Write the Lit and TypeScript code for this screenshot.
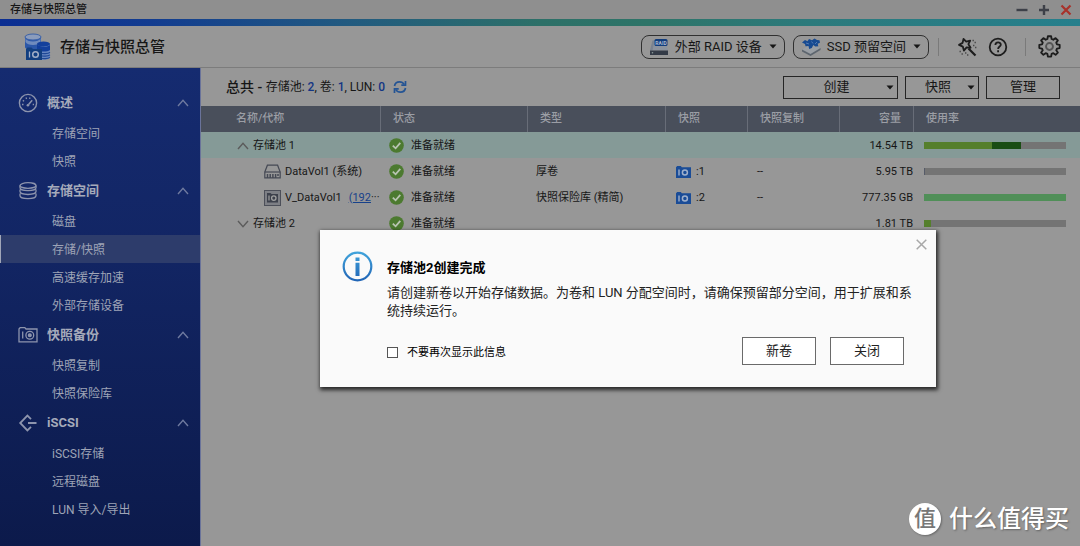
import { LitElement, html, css, svg } from "lit";
import { customElement, state } from "lit/decorators.js";
import { classMap } from "lit/directives/class-map.js";

const caret = svg`<svg class="caret" viewBox="0 0 8 5" width="8" height="5"><path d="M0.5 0.5h7L4 4.6z" fill="currentColor"/></svg>`;

const chevron = (up: boolean) => html`<svg width="12" height="8" viewBox="0 0 12 8" fill="none" stroke="currentColor" stroke-width="1.4">
  <path d=${up ? "M1 7 6 1.4 11 7" : "M1 1 6 6.6 11 1"} />
</svg>`;

const okIcon = html`<svg class="ok" width="15" height="15" viewBox="0 0 15 15">
  <circle cx="7.5" cy="7.5" r="7.3" fill="#4c7a30" />
  <path d="M3.8 7.6 6.6 10.3 11.3 4.9" fill="none" stroke="#b9c4b2" stroke-width="1.8" />
</svg>`;

const snapIcon = html`<svg width="15" height="12" viewBox="0 0 15 12">
  <path d="M0 1.2 1.2 0h3.6l1 1.2H15V12H0z" fill="#1a4c97" />
  <path d="M3 3.4v6" stroke="#9fb0cc" stroke-width="1.4" />
  <circle cx="8.9" cy="6.4" r="2.5" fill="none" stroke="#9fb0cc" stroke-width="1.5" />
</svg>`;

const diskIcon = html`<svg width="17" height="15" viewBox="0 0 17 15" fill="none" stroke="#454954" stroke-width="1.2">
  <path d="M.8 8 3.4 1.2h10.2L16.2 8v5.8H.8z" />
  <path d="M.8 8h15.4" />
  <path d="M3.5 10v4M6.200 10v4M8.900 10v4M11.600 10v4M14 10v2" stroke-width="1.5" />
</svg>`;

const vaultIcon = html`<svg width="17" height="16" viewBox="0 0 17 16">
  <rect x=".5" y=".5" width="16" height="15" fill="#7d7f85" stroke="#4c4f59" />
  <path d="M3 3h3.500l1 1H14v8.500H3z" fill="#3d414c" />
  <path d="M5 5.500v5" stroke="#a0a0a0" stroke-width="1.2" />
  <circle cx="9.800" cy="8.100" r="2.200" fill="none" stroke="#a0a0a0" stroke-width="1.300" />
</svg>`;

const navIcons: Record<string, unknown> = {
  gauge: svg`<svg width="20" height="20" viewBox="0 0 20 20" fill="none" stroke="currentColor" stroke-width="1.400">
    <circle cx="10" cy="10" r="8.600"/>
    <path d="M10.600 11.500 14.200 7.200" stroke-width="1.500"/>
    <circle cx="9.900" cy="12.300" r="1.300" fill="currentColor" stroke="none"/>
    <path d="M4 11.500h1.500M4.800 7.400l1.300.8M8 4.500l.6 1.400M12 4.500l-.4 1.400M14.700 11.500H16" stroke-width="1.300"/></svg>`,
  stack: svg`<svg width="20" height="20" viewBox="0 0 20 20" fill="none" stroke="currentColor" stroke-width="1.300">
    <ellipse cx="10" cy="4.500" rx="8" ry="2.800"/>
    <path d="M2 4.500v2.200c0 1.600 3.600 2.900 8 2.900s8-1.300 8-2.900V4.500M2 8.600v2c0 1.600 3.600 2.900 8 2.900s8-1.300 8-2.900v-2M2 12.600v2.200c0 1.600 3.600 2.900 8 2.900s8-1.300 8-2.900v-2.200"/></svg>`,
  camera: svg`<svg width="20" height="20" viewBox="0 0 20 20" fill="none" stroke="currentColor" stroke-width="1.300">
    <path d="M1 4 2.200 2.600h4.600L8 4h11v12.800H1z"/><path d="M4.700 6.500v7"/>
    <circle cx="11.800" cy="10.200" r="3.900"/><circle cx="11.800" cy="10.200" r="1.400" fill="currentColor"/></svg>`,
  iscsi: svg`<svg width="20" height="20" viewBox="0 0 20 20" fill="none" stroke="currentColor" stroke-width="1.800">
    <path d="M13 6.200 9.400 2.600 2.200 10l7.200 7.400 3.600-3.600M10 10h8.500"/></svg>`,
};

interface Section { icon: string; title: string; items: string[] }

const sections: Section[] = [
  { icon: "gauge", title: "概述", items: ["存储空间", "快照"] },
  { icon: "stack", title: "存储空间", items: ["磁盘", "存储/快照", "高速缓存加速", "外部存储设备"] },
  { icon: "camera", title: "快照备份", items: ["快照复制", "快照保险库"] },
  { icon: "iscsi", title: "iSCSI", items: ["iSCSI存储", "远程磁盘", "LUN 导入/导出"] },
];

interface Row {
  name: string; kind: "open" | "closed" | "disk" | "vault"; link?: string; type?: string;
  snaps?: number; capacity: string; usage: { share: number; tone: string }[];
}

const rows: Row[] = [
  { name: "存储池 1", kind: "open", capacity: "14.54 TB", usage: [{ share: 48, tone: "used" }, { share: 20, tone: "reserved" }] },
  { name: "DataVol1 (系统)", kind: "disk", type: "厚卷", snaps: 1, capacity: "5.95 TB", usage: [{ share: 1, tone: "slate" }] },
  { name: "V_DataVol1", link: "(192", kind: "vault", type: "快照保险库 (精简)", snaps: 2, capacity: "777.35 GB", usage: [{ share: 100, tone: "mint" }] },
  { name: "存储池 2", kind: "closed", capacity: "1.81 TB", usage: [{ share: 5, tone: "used" }] },
];

@customElement("app-root")
export class AppRoot extends LitElement {
  @state() private dialogOpen = true;

  static styles = css`
    :host {
      display: flex; flex-direction: column; min-height: 100vh; position: relative;
      background: #979797; color: #161616;
      font: 11px/16px Roboto, "Noto Sans CJK SC", sans-serif;
    }
    * { box-sizing: border-box; }
    svg { display: block; flex: none; }
    button { font: inherit; color: inherit; background: none; border: 0; padding: 0; margin: 0; cursor: pointer; }
    a { color: inherit; text-decoration: none; }
    .titlebar { height: 19px; display: flex; align-items: center; justify-content: space-between; padding: 0 8px 0 10px; background: #8f8f8f; font-weight: 500; }
    .window-controls { display: flex; gap: 10px; color: #3d4048; }
    .stripe { height: 7px; background: linear-gradient(90deg, #0b2e92 0%, #123c90 14%, #225a80 32%, #2d7068 50%, #2e7468 60%, #2c7a7c 75%, #267f8c 100%); }
    .header { height: 42px; display: flex; align-items: center; padding: 0 19px 0 23px; border-bottom: 1px solid #7c7c7c; }
    .brand { display: flex; align-items: center; gap: 8px; margin: 0 auto 0 0; font-size: 15px; line-height: 20px; font-weight: 500; }
    .tools { display: flex; align-items: center; gap: 8px; }
    .pill { height: 24px; display: flex; align-items: center; gap: 6px; padding: 0 7px; border: 1px solid #303030; border-radius: 8px; font-size: 13px; line-height: 20px; }
    .pill .caret { margin-left: 1px; }
    .divider { width: 1px; height: 18px; background: #7a7a7a; }
    .divider.near { margin: 0 10px 0 1px; }
    .divider.far { margin: 0 4px 0 9px; }
    .help { margin-left: 3px; }
    .body { flex: 1; display: flex; }
    .sidebar { width: 201px; flex: none; padding-top: 19px; border-right: 1px solid #6a739a; color: #9ea4b6; background: linear-gradient(#152b70, #122563 40%, #0c1a4b); }
    .section { width: 100%; height: 32px; display: flex; align-items: center; gap: 9px; padding: 0 11px 0 18px; font-size: 13px; line-height: 20px; font-weight: 700; color: #a5aaba; }
    .section span { margin-right: auto; }
    .section svg { color: #8d94ad; }
    .section > svg:last-child { color: #6f7a9f; }
    .item { display: block; height: 28px; line-height: 30px; font-size: 12px; padding-left: 52px; }
    .item.active { background: #2d3c6b; border-left: 1px solid #a0a6b8; padding-left: 51px; }
    .main { flex: 1; min-width: 0; }
    .toolbar { height: 38px; display: flex; align-items: center; gap: 7px; padding: 0 20px 0 25px; }
    .summary { display: flex; align-items: center; margin: 0 auto 0 0; font-size: 12px; line-height: 20px; font-weight: 400; white-space: pre; }
    .summary .lead { font-size: 14px; font-weight: 500; }
    .summary b { color: #133584; font-weight: 500; }
    .refresh { margin-left: 8px; }
    .action { height: 23px; width: 74px; display: flex; align-items: center; border: 1px solid #252525; font-size: 13px; line-height: 20px; padding: 0 3px; }
    .action.wide { width: 115px; }
    .action span { flex: 1; text-align: center; }
    table { width: 100%; table-layout: fixed; border-collapse: separate; border-spacing: 0; }
    th, td { padding: 0; height: 26px; text-align: left; font-weight: 400; white-space: nowrap; }
    th { background: #494f5b; color: #9b9ea5; padding-left: 12px; border-right: 1px solid #686d78; font-weight: 500; }
    th:first-child { padding-left: 35px; }
    th:last-child { border-right: 0; }
    th.num { text-align: right; padding-right: 12px; }
    td { padding: 1px 0 0 8px; }
    td.num { text-align: right; padding: 1px 1px 0 0; }
    td.snap { padding-left: 10px; }
    td.copy { padding-left: 9px; }
    td.usage { padding: 0 14px 0 10px; }
    td.name { padding-left: 36px; }
    td.name.child { padding-left: 63px; }
    tr.selected td { background: #859a97; }
    .c-name { width: 180px; } .c-status { width: 147px; } .c-type { width: 138px; } .c-snap { width: 82px; }
    .c-copy { width: 92px; } .c-cap { width: 74px; }
    .cell { display: flex; align-items: center; gap: 4px; }
    .cell.status { gap: 7px; }
    .cell.snaps { gap: 5px; }
    .cell .toggle { color: #5b5b5b; }
    .cell a { color: #17418a; text-decoration: underline; margin-left: 3px; }
    .more { margin-left: -4px; }
    .meter { height: 7px; display: flex; background: #747474; }
    .used { background: #557f2c; } .reserved { background: #1a4d14; } .slate { background: #565b68; } .mint { background: #508f58; }
    .dialog { position: absolute; left: 320px; top: 230px; width: 616px; margin: 0; border: 0; padding: 28px 20px 22px 67px; background: #fafafa; color: #222; box-shadow: 1px 2px 4px 1px rgba(0, 0, 0, .75); font-size: 13px; line-height: 18px; }
    .dialog h2 { margin: 0 0 6px; font-size: 13px; line-height: 20px; font-weight: 700; color: #000; }
    .dialog p { margin: 0; }
    .info { position: absolute; left: 22px; top: 21px; }
    .close { position: absolute; right: 9px; top: 9px; color: #a8a8a8; }
    .footer { display: flex; align-items: center; gap: 14px; margin-top: 17px; padding-right: 12px; }
    .remember { display: flex; align-items: center; gap: 9px; margin: 3px auto 0 0; font-size: 11px; line-height: 16px; color: #000; }
    .remember input { appearance: none; width: 11px; height: 11px; margin: 0; border: 1px solid #555; background: #fff; }
    .remember input:checked { background: #2a7bd0; }
    .footer button { width: 74px; height: 28px; border: 1px solid #6a6a6a; background: #fff; }
    .watermark { position: absolute; right: 11px; bottom: 11px; display: flex; align-items: center; gap: 8px; color: #fff; font-size: 24px; line-height: 32px; font-weight: 500; text-shadow: 1px 1px 2px rgba(0, 0, 0, .35); }
    .seal { width: 32px; height: 32px; border-radius: 50%; background: #fff; color: #777; text-align: center; font-size: 22px; line-height: 31px; text-shadow: none; box-shadow: 1px 1px 2px rgba(0, 0, 0, .3); }
  `;

  private closeDialog() { this.dialogOpen = false; }

  private renderRow(r: Row) {
    const child = r.kind === "disk" || r.kind === "vault";
    return html`<tr class=${classMap({ selected: r.kind === "open" })}>
      <td class=${classMap({ name: true, child })}><div class="cell">
        ${child ? (r.kind === "disk" ? diskIcon : vaultIcon)
          : html`<button class="toggle" aria-label=${r.name} aria-expanded=${r.kind === "open"}>${chevron(r.kind === "open")}</button>`}
        <span>${r.name}</span>
        ${r.link ? html`<a href="#host">${r.link}</a><span class="more">···</span>` : ""}
      </div></td>
      <td><div class="cell status">${okIcon}<span>准备就绪</span></div></td>
      <td>${r.type ?? ""}</td>
      <td class="snap">${r.snaps ? html`<div class="cell snaps">${snapIcon}<span>:${r.snaps}</span></div>` : ""}</td>
      <td class="copy">${r.snaps ? "--" : ""}</td>
      <td class="num">${r.capacity}</td>
      <td class="usage"><div class="meter">${r.usage.map((u) => html`<div class=${u.tone} style="width:${u.share}%"></div>`)}</div></td>
    </tr>`;
  }

  render() {
    return html`
      <div class="titlebar">
        <span>存储与快照总管</span>
        <div class="window-controls">
          <button aria-label="最小化"><svg width="12" height="12" viewBox="0 0 12 12" stroke="currentColor" stroke-width="2.400"><path d="M.5 6h11"/></svg></button>
          <button aria-label="最大化"><svg width="12" height="12" viewBox="0 0 12 12" stroke="currentColor" stroke-width="2.400"><path d="M1 6h10M6 1v10"/></svg></button>
          <button aria-label="关闭窗口"><svg width="12" height="12" viewBox="0 0 12 12" stroke="#a8322b" stroke-width="2.200"><path d="m1.500 1.500 9 9M10.500 1.500l-9 9"/></svg></button>
        </div>
      </div>
      <div class="stripe"></div>
      <header class="header">
        <h1 class="brand">
          <svg width="29" height="28" viewBox="0 0 29 28">
            <path d="M2 4v10c0 2 4 3 8 3s8-1 8-3V4z" fill="#2b57a8"/>
            <path d="M2.500 5.500c1 2 4 3 7.500 3s6.500-1 7.500-3V9c-1 2-4 3-7.500 3s-6.500-1-7.500-3z" fill="#6f8bbd"/>
            <ellipse cx="10" cy="4" rx="8" ry="3" fill="#8b9cbc" stroke="#3c62a8"/>
            <path d="M14 11v13c0 2 3 2.800 7 2.800s6-1 6-2.800V11z" fill="#6686c0"/>
            <ellipse cx="20.500" cy="11" rx="6.500" ry="2.600" fill="#123f9c"/>
            <path d="M14 11c2 3 10 4 13 1v5c-3 2-9 2-13 0z" fill="#123f9c"/>
            <path d="M17 20c3 1 8 .8 10-.6M17 22.500c3 1 8 .8 10-.6M17 25c3 1 8 .8 10-.6" fill="none" stroke="#1d4796" stroke-width="1.100"/>
            <path d="m3 16 1.500-1.500h4L10 16h9v11H3z" fill="#123f80"/>
            <path d="M6.500 18.500v6" stroke="#a2afc6" stroke-width="1.300"/>
            <circle cx="12.500" cy="21.500" r="2.800" fill="none" stroke="#a2afc6" stroke-width="1.500"/>
          </svg>
          <span>存储与快照总管</span>
        </h1>
        <div class="tools">
          <button class="pill">
            <svg width="20" height="18" viewBox="0 0 20 18">
              <path d="M3.500 2.500h13L19 12.500H1z" fill="#8c939e"/><path d="M3.500 2.500 1 12.500h2.500l2-10z" fill="#7b838f"/>
              <rect x="1" y="12.500" width="18" height="4.500" fill="#343b47"/><circle cx="3.500" cy="14.800" r=".8" fill="#8c9c9a"/>
              <rect x="5.500" y="1" width="13" height="7" rx="1.500" fill="#113c7c"/>
              <text x="12" y="6.500" text-anchor="middle" font-size="5" font-weight="700" fill="#a9b7cd">RAID</text>
            </svg>
            <span>外部 RAID 设备</span>${caret}
          </button>
          <button class="pill">
            <svg width="20" height="18" viewBox="0 0 20 18">
              <path d="M1 11.500v2L9.500 18l10-6v-2z" fill="#5d656e"/><path d="m1 11.500 9-5 9.500 3.500-10 6z" fill="#999ea4"/>
              <path d="m1 4.500 3-2.500 2.500 1.300L8 1l3 1.300L13.500.5l2.500 1.600 2.500.2.500 2.500-2.300 1 .6 2.400-3 .3-2-1.500-1.500 3-2.600.9L7.500 8l-3 .2L4 6z" fill="#174a91"/>
              <path d="m5 5 3 1M10.500 3.500l1.500 2M14 6l2-2" stroke="#4f7ab4"/>
            </svg>
            <span>SSD 预留空间</span>${caret}
          </button>
          <span class="divider near"></span>
          <button aria-label="向导"><svg width="20" height="20" viewBox="0 0 20 20" fill="none" stroke="#1d1d1d" stroke-width="1.800" stroke-linejoin="round">
            <path d="M6.500 2 9.200 4.600l4-1-1.800 3.600 2.200 3.600-4-.4-2.700 3.200-1.100-4L2 7.900l3.600-2z"/>
            <path d="m11.500 11.500 7 7" stroke-width="2.200"/>
            <path d="M15.500 3.500h1.400M17.500 5.500h1.400M16 8.500h1.400M18 10.500h1.400M2.500 14.500h1.400M4.500 17h1.400M8 16h1.400M10 18h1.400" stroke="#4a4a4a" stroke-width="1.300"/>
          </svg></button>
          <button class="help" aria-label="帮助"><svg width="20" height="20" viewBox="0 0 20 20" fill="none" stroke="#1d1d1d" stroke-width="1.800">
            <circle cx="10" cy="10" r="8.300"/><path d="M7.400 8c0-3.400 5.400-3.400 5.400-.3 0 1.900-2.700 1.900-2.700 4.300"/><path d="M10.100 13.300v1.900"/>
          </svg></button>
          <span class="divider far"></span>
          <button aria-label="设置"><svg width="23" height="23" viewBox="0 0 24 24" fill="none" stroke="#1d1d1d" stroke-width="2" stroke-linejoin="round">
            <path d="M10.200 1.800h3.600l.5 3 1.900.8 2.500-1.800 2.500 2.500-1.800 2.500.8 1.900 3 .5v3.600l-3 .5-.8 1.900 1.800 2.500-2.500 2.500-2.500-1.800-1.900.8-.5 3h-3.600l-.5-3-1.900-.8-2.500 1.800-2.500-2.500 1.800-2.500-.8-1.900-3-.5v-3.600l3-.5.8-1.900-1.800-2.500 2.500-2.500 2.500 1.800 1.900-.8z" transform="translate(.6 -.4) scale(.95)"/>
            <circle cx="12" cy="12" r="3.600" stroke="#555"/>
          </svg></button>
        </div>
      </header>
      <div class="body">
        <nav class="sidebar">
          ${sections.map((s) => html`
            <button class="section" aria-expanded="true">${navIcons[s.icon]}<span>${s.title}</span>${chevron(true)}</button>
            ${s.items.map((i) => html`<a href="#view" class=${classMap({ item: true, active: i === "存储/快照" })}>${i}</a>`)}`)}
        </nav>
        <main class="main">
          <div class="toolbar">
            <div class="summary"><span class="lead">总共 - </span><span>存储池: <b>2</b>, 卷: <b>1</b>, LUN: <b>0</b></span>
              <button class="refresh" aria-label="刷新"><svg width="14" height="14" viewBox="0 0 14 14" fill="none" stroke="#245494" stroke-width="1.700">
                <path d="M1.500 6C1.900 3.500 4 1.800 6.600 1.800c2 0 3.500.8 4.600 2.600M12.500 8c-.4 2.500-2.500 4.200-5.100 4.200-2 0-3.500-.8-4.600-2.600"/><path d="M12.500 1v4.200H8.300M1.500 13V8.800h4.200"/>
              </svg></button></div>
            <button class="action wide"><span>创建</span>${caret}</button>
            <button class="action"><span>快照</span>${caret}</button>
            <button class="action"><span>管理</span></button>
          </div>
          <table>
            <colgroup><col class="c-name"><col class="c-status"><col class="c-type"><col class="c-snap"><col class="c-copy"><col class="c-cap"><col></colgroup>
            <thead><tr><th>名称/代称</th><th>状态</th><th>类型</th><th>快照</th><th>快照复制</th><th class="num">容量</th><th>使用率</th></tr></thead>
            <tbody>${rows.map((r) => this.renderRow(r))}</tbody>
          </table>
        </main>
      </div>
      <dialog class="dialog" ?open=${this.dialogOpen} aria-labelledby="dialog-title">
        <svg class="info" width="31" height="31" viewBox="0 0 31 31">
          <defs><linearGradient id="blue" x1="0" y1="0" x2="0" y2="31" gradientUnits="userSpaceOnUse"><stop offset="0" stop-color="#42a6dd"/><stop offset="1" stop-color="#1f62b4"/></linearGradient></defs>
          <circle cx="15.500" cy="15.500" r="13.800" fill="none" stroke="url(#blue)" stroke-width="2.200"/>
          <path d="M13.500 6.500h4v3.500h-4zM13.500 11.800h4V25h-4z" fill="url(#blue)"/>
        </svg>
        <button class="close" aria-label="关闭对话框" @click=${this.closeDialog}><svg width="11" height="11" viewBox="0 0 11 11" stroke="currentColor" stroke-width="1.500"><path d="m.7.7 9.600 9.600M10.300.7.7 10.300"/></svg></button>
        <h2 id="dialog-title">存储池2创建完成</h2>
        <p>请创建新卷以开始存储数据。为卷和 LUN 分配空间时，请确保预留部分空间，用于扩展和系统持续运行。</p>
        <div class="footer">
          <label class="remember"><input type="checkbox"><span>不要再次显示此信息</span></label>
          <button>新卷</button>
          <button @click=${this.closeDialog}>关闭</button>
        </div>
      </dialog>
      <div class="watermark"><span class="seal">值</span><span>什么值得买</span></div>
    `;
  }
}
